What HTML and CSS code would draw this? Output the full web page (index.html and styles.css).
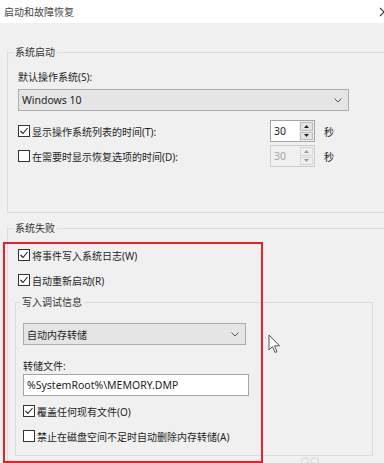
FILE: index.html
```html
<!DOCTYPE html>
<html>
<head>
    <meta charset="utf-8">
    <title>启动和故障恢复</title>
    <link rel="stylesheet" href="styles.css">
</head>
<body>
    <div class="titlebar">
        <span class="title">启动和故障恢复</span>
        <svg class="close" width="10" height="10" viewBox="0 0 10 10"><path d="M1 1 L9 9 M9 1 L1 9" stroke="#333" stroke-width="1.1" fill="none"/></svg>
    </div>

    <!-- 系统启动 -->
    <fieldset class="group group-startup">
        <legend>系统启动</legend>
        <div class="startup-body">
            <div class="label">默认操作系统(S):</div>
            <div class="combo combo-os">
                <span class="latin">Windows 10</span>
                <svg width="8" height="5" viewBox="0 0 8 5"><path d="M0.5 0.5 L4 4 L7.5 0.5" stroke="#555" fill="none"/></svg>
            </div>
            <div class="timer-row">
                <label class="check">
                    <span class="box"><svg width="10" height="10" viewBox="0 0 10 10"><path d="M1.5 5 L4 7.5 L8.5 2" stroke="#222" stroke-width="1.1" fill="none"/></svg></span>
                    显示操作系统列表的时间(T):
                </label>
                <div class="spin">
                    <span class="spin-value">30</span>
                    <span class="spin-btns">
                        <span class="spin-btn"><svg width="5" height="3" viewBox="0 0 5 3"><path d="M0 3 L2.5 0 L5 3 Z" fill="#222"/></svg></span>
                        <span class="spin-btn"><svg width="5" height="3" viewBox="0 0 5 3"><path d="M0 0 L2.5 3 L5 0 Z" fill="#222"/></svg></span>
                    </span>
                </div>
                <span class="unit">秒</span>
            </div>
            <div class="timer-row timer-row-second">
                <label class="check">
                    <span class="box"></span>
                    在需要时显示恢复选项的时间(D):
                </label>
                <div class="spin spin-disabled">
                    <span class="spin-value">30</span>
                    <span class="spin-btns">
                        <span class="spin-btn"><svg width="5" height="3" viewBox="0 0 5 3"><path d="M0 3 L2.5 0 L5 3 Z" fill="#9a9a9a"/></svg></span>
                        <span class="spin-btn"><svg width="5" height="3" viewBox="0 0 5 3"><path d="M0 0 L2.5 3 L5 0 Z" fill="#9a9a9a"/></svg></span>
                    </span>
                </div>
                <span class="unit">秒</span>
            </div>
        </div>
    </fieldset>

    <!-- 系统失败 -->
    <fieldset class="group group-failure">
        <legend>系统失败</legend>
        <div class="failure-body">
            <label class="check check-row">
                <span class="box"><svg width="10" height="10" viewBox="0 0 10 10"><path d="M1.5 5 L4 7.5 L8.5 2" stroke="#222" stroke-width="1.1" fill="none"/></svg></span>
                将事件写入系统日志(W)
            </label>
            <label class="check check-row check-row-next">
                <span class="box"><svg width="10" height="10" viewBox="0 0 10 10"><path d="M1.5 5 L4 7.5 L8.5 2" stroke="#222" stroke-width="1.1" fill="none"/></svg></span>
                自动重新启动(R)
            </label>

            <fieldset class="group group-dump">
                <legend>写入调试信息</legend>
                <div class="dump-body">
                    <div class="combo combo-dump">
                        <span>自动内存转储</span>
                        <svg width="8" height="5" viewBox="0 0 8 5"><path d="M0.5 0.5 L4 4 L7.5 0.5" stroke="#555" fill="none"/></svg>
                    </div>
                    <div class="label field-label">转储文件:</div>
                    <div class="path-input latin">%SystemRoot%\MEMORY.DMP</div>
                    <label class="check check-row dump-check">
                        <span class="box"><svg width="10" height="10" viewBox="0 0 10 10"><path d="M1.5 5 L4 7.5 L8.5 2" stroke="#222" stroke-width="1.1" fill="none"/></svg></span>
                        覆盖任何现有文件(O)
                    </label>
                    <label class="check check-row dump-check dump-check-next">
                        <span class="box"></span>
                        禁止在磁盘空间不足时自动删除内存转储(A)
                    </label>
                </div>
            </fieldset>
        </div>
    </fieldset>

    <!-- annotation + pointer overlays -->
    <div class="highlight"></div>
    <svg class="cursor" width="13" height="21" viewBox="0 0 13 21">
        <path d="M1 1 L1 16 L4.5 12.5 L7 18.5 L9 17.6 L6.6 11.8 L11.5 11.8 Z" fill="#fff" stroke="#555" stroke-width="1" stroke-linejoin="round"/>
    </svg>
    <div class="watermark"><span></span><span></span></div>
</body>
</html>
```

FILE: styles.css
```css
body {
    margin: 0;
    width: 384px;
    height: 463px;
    overflow: hidden;
    position: relative;
    background: #f0f0f0;
    font-family: "Noto Sans", "Noto Sans CJK SC", sans-serif;
    font-size: 10px;
    color: #1e1e1e;
}
.latin {
    font-size: 10.5px;
}
/* Title bar */
.titlebar {
    height: 23px;
    background: #fff;
    display: flex;
    align-items: center;
    justify-content: space-between;
    padding-left: 4px;
    overflow: hidden;
}
.title {
    color: #444;
    line-height: 14px;
}
.close {
    margin-right: -5px;
}
/* Group boxes */
.group {
    border: 1px solid #dcdcdc;
    margin: 0;
    padding: 0;
    min-width: 0;
}
.group legend {
    margin-left: 5px;
    padding: 0 2px;
    line-height: 14px;
    color: #333;
}
/* outer boxes run off the right edge of the window */
.group-startup,
.group-failure {
    box-sizing: border-box;
    width: 377px;
    border-right: none;
}
.group-startup {
    margin: 22px 0 0 7px;
}
.startup-body {
    padding: 11px 0 45px 10px;
}
.label {
    line-height: 14px;
}
.combo {
    box-sizing: border-box;
    height: 22px;
    border: 1px solid #adadad;
    background: #e5e5e5;
    display: flex;
    align-items: center;
    justify-content: space-between;
    padding: 0 6px 0 3px;
}
.combo-os {
    width: 331px;
    margin-top: 5px;
}
.timer-row {
    display: grid;
    grid-template-columns: 243px 45px auto;
    column-gap: 9px;
    align-items: center;
    height: 22px;
    margin-top: 9px;
}
.timer-row-second {
    margin-top: 3px;
}
.check {
    display: flex;
    align-items: center;
    gap: 2px;
}
.box {
    box-sizing: border-box;
    width: 12px;
    height: 12px;
    border: 1px solid #333;
    background: #fff;
    display: flex;
    align-items: center;
    justify-content: center;
}
.spin {
    box-sizing: border-box;
    height: 22px;
    border: 1px solid #a4a4a4;
    background: #fff;
    display: flex;
}
.spin-value {
    flex: 1;
    padding-left: 3px;
    line-height: 20px;
    font-size: 10.5px;
}
.spin-btns {
    width: 13px;
    display: flex;
    flex-direction: column;
    gap: 1px;
    padding: 1px;
    background: #f0f0f0;
}
.spin-btn {
    flex: 1;
    background: #e4e4e4;
    border: 1px solid #bcbcbc;
    display: flex;
    align-items: center;
    justify-content: center;
}
.spin-disabled {
    background: #f0f0f0;
    border-color: #cccccc;
}
.spin-disabled .spin-value {
    color: #a6a6a6;
}
.spin-disabled .spin-btn {
    background: #efefef;
    border-color: #d6d6d6;
}
.unit {
    color: #222;
}
.group-failure {
    margin: 8px 0 0 7px;
}
.failure-body {
    padding: 12px 0 20px 10px;
}
.check-row {
    height: 16px;
}
.check-row-next {
    margin-top: 9px;
}
.group-dump {
    box-sizing: border-box;
    width: 358px;
    margin: 7px 0 0 -3px;
}
.group-dump legend {
    margin-left: 4px;
}
.dump-body {
    padding: 14px 0 11px 7px;
}
.combo-dump {
    width: 223px;
}
.field-label {
    margin-top: 14px;
}
.path-input {
    box-sizing: border-box;
    width: 226px;
    height: 22px;
    margin-top: 1px;
    border: 1px solid #a4a4a4;
    background: #fff;
    padding-left: 3px;
    line-height: 20px;
}
.dump-check {
    margin-top: 7px;
}
.dump-check-next {
    margin-top: 9px;
}
/* Red annotation frame */
.highlight {
    position: absolute;
    left: 3px;
    top: 242px;
    width: 256px;
    height: 217px;
    border: 2px solid #e8202a;
}
.cursor {
    position: absolute;
    left: 268px;
    top: 334px;
}
.watermark {
    position: absolute;
    left: 301px;
    top: 457px;
    display: flex;
    gap: 2px;
}
.watermark span {
    width: 6px;
    height: 6px;
    border-radius: 50%;
    border: 1px solid #d8d8d8;
}
```
